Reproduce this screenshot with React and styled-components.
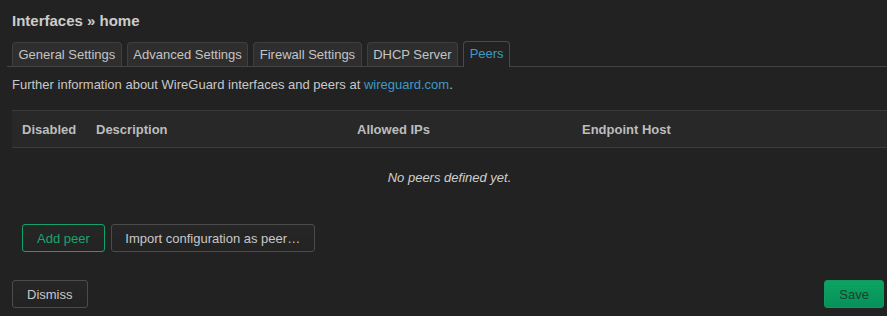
import React from 'react';
import styled, { createGlobalStyle } from 'styled-components';

const Global = createGlobalStyle`
  html, body {
    margin: 0;
    background: #222222;
  }
  body {
    font-family: "Liberation Sans", Arial, sans-serif;
    font-size: 13px;
    color: #c8c8c8;
  }
`;

const Page = styled.div`
  padding: 12px 4px 8px 12px;
  overflow: hidden;
`;

const Title = styled.h2`
  margin: 0 0 12px;
  font-size: 15px;
  font-weight: bold;
  color: #cccccc;
  line-height: 18px;
`;

const TabBar = styled.ul`
  display: flex;
  gap: 5px;
  list-style: none;
  margin: 0 -4px 0 -5px;
  padding: 0 0 0 5px;
  border-bottom: 1px solid #444444;
`;

const Tab = styled.li`
  height: 23px;
  line-height: 23px;
  padding: 0 5.5px;
  border: 1px solid #3f3f3f;
  border-bottom: none;
  border-radius: 4px 4px 0 0;
  background: ${p => (p.$active ? '#222222' : '#2e2e2e')};
  color: ${p => (p.$active ? '#3d9ac4' : '#c4c4c4')};
  margin-bottom: ${p => (p.$active ? '-1px' : '0')};
  ${p => p.$active && 'height: 25px; margin-top: -1px; border-color: #4a4a4a;'}
`;

const Info = styled.p`
  margin: 10px 0 0;
  line-height: 16px;
  color: #c8c8c8;
`;

const Link = styled.a`
  color: #3d9ac4;
  text-decoration: none;
`;

const Table = styled.div`
  margin: 17px -4px 0 0;
`;

const HeadRow = styled.div`
  display: grid;
  grid-template-columns: 74px 261px 225px 1fr;
  height: 36px;
  align-items: center;
  background: #282828;
  border-top: 1px solid #3a3a3a;
  border-bottom: 1px solid #3c3c3c;
`;

const Th = styled.div`
  padding-left: 10px;
  font-weight: bold;
  color: #bdbdbd;
`;

const Empty = styled.div`
  height: 59px;
  display: flex;
  align-items: center;
  justify-content: center;
  font-style: italic;
  color: #cfcfcf;
`;

const Actions = styled.div`
  display: flex;
  gap: 6px;
  padding: 17px 10px 0;
`;

const Button = styled.button`
  font-family: inherit;
  font-size: 13px;
  height: 28px;
  padding: 0 ${p => p.$pad || 13}px;
  border-radius: 3px;
  cursor: pointer;
  border: 1px solid ${p => (p.$variant === 'add' ? '#12a26a' : p.$variant === 'save' ? '#0f9a5f' : '#4b4b4b')};
  color: ${p => (p.$variant === 'add' ? '#14a76c' : p.$variant === 'save' ? '#1c3f2c' : '#c8c8c8')};
  background: ${p =>
    p.$variant === 'save'
      ? 'linear-gradient(#0ca462, #07905a)'
      : 'linear-gradient(#262626, #232323)'};
`;

const Footer = styled.div`
  display: flex;
  justify-content: space-between;
  margin-top: 28px;
  margin-right: -1px;
`;

export default function App() {
  const tabs = ['General Settings', 'Advanced Settings', 'Firewall Settings', 'DHCP Server', 'Peers'];
  return (
    <>
      <Global />
      <Page>
        <Title>Interfaces » home</Title>
        <TabBar>
          {tabs.map(t => (
            <Tab key={t} $active={t === 'Peers'}>{t}</Tab>
          ))}
        </TabBar>
        <Info>
          Further information about WireGuard interfaces and peers at <Link href="#">wireguard.com</Link>.
        </Info>
        <Table>
          <HeadRow>
            <Th>Disabled</Th>
            <Th>Description</Th>
            <Th>Allowed IPs</Th>
            <Th>Endpoint Host</Th>
          </HeadRow>
          <Empty>No peers defined yet.</Empty>
        </Table>
        <Actions>
          <Button $variant="add" $pad={14}>Add peer</Button>
          <Button $pad={13.5}>Import configuration as peer…</Button>
        </Actions>
        <Footer>
          <Button $pad={14}>Dismiss</Button>
          <Button $variant="save" $pad={14}>Save</Button>
        </Footer>
      </Page>
    </>
  );
}
